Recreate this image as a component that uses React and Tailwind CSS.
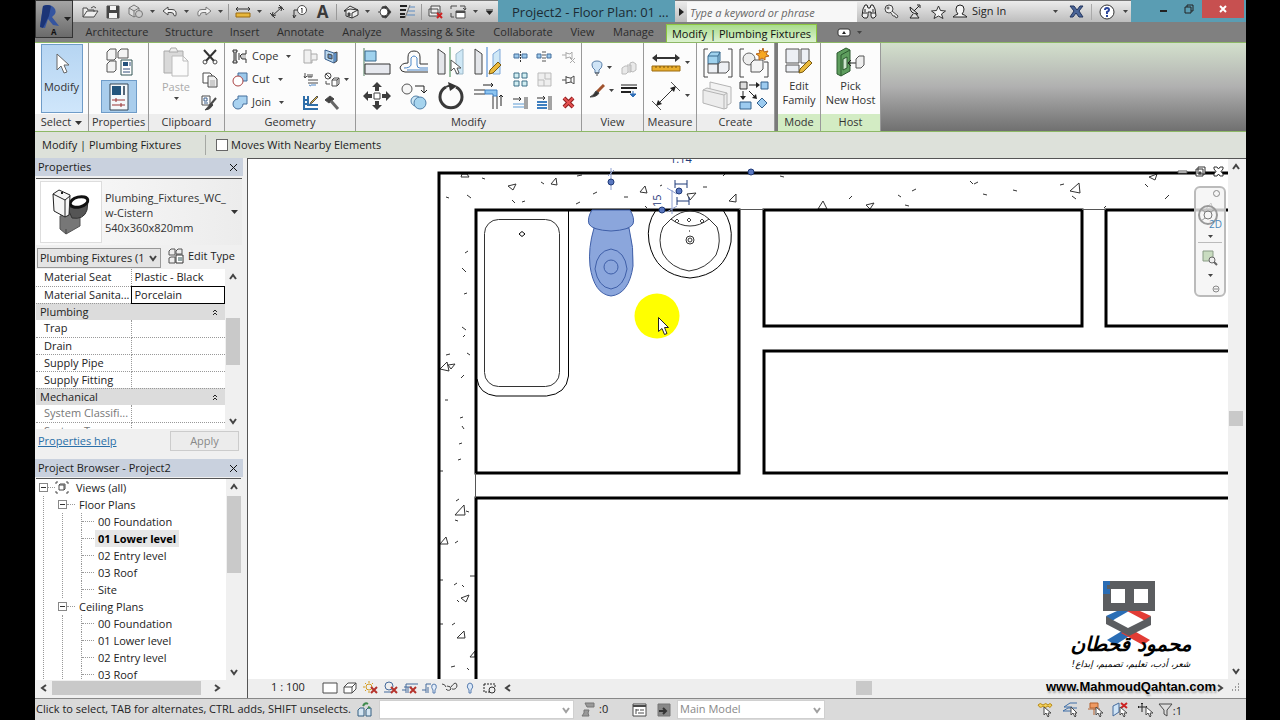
import React, { useState } from "react";

function Svg({ w, h, children, className = "" }) {
  return (
    <svg
      width={w}
      height={h}
      viewBox={`0 0 ${w} ${h}`}
      fill="none"
      stroke="#4a4a4a"
      aria-hidden="true"
      className={`shrink-0 ${className}`}
    >
      {children}
    </svg>
  );
}

function Caret({ className = "" }) {
  return (
    <Svg w={5} h={3} className={className}>
      <path d="M0 0h5L2.5 3z" fill="#444" stroke="none" />
    </Svg>
  );
}

const qatIcons = {
  open: (
    <Svg w={18} h={14}>
      <path d="M2 12V3h4l1 2h6v2M2 12l4-6h11l-4 6z" fill="#eee" />
      <path d="M10 3q3-3 5 0" />
    </Svg>
  ),
  save: (
    <Svg w={14} h={14}>
      <path d="M1 1h12v12H1z" fill="#444" />
      <path d="M4 1h6v4H4zM3 8h8v5H3z" fill="#f4f4f4" stroke="none" />
    </Svg>
  ),
  sync: (
    <Svg w={16} h={15}>
      <path d="M1 4l5-3 5 3v6l-5 3-5-3zM1 4l5 3 5-3M6 7v6" stroke="#777" fill="#ddd" />
      <circle cx="11" cy="10" r="3.5" stroke="#777" fill="#ccc" />
    </Svg>
  ),
  undo: (
    <Svg w={16} h={12}>
      <path d="M1 5l5-4v2.500h4q5 0 4 6-1 1-2 0 0-3-3-3H6V9z" fill="#f2f2f2" />
    </Svg>
  ),
  redo: (
    <Svg w={16} h={12}>
      <path d="M15 5l-5-4v2.500H6q-5 0-4 6 1 1 2 0 0-3 3-3h3V9z" fill="#f2f2f2" stroke="#777" />
    </Svg>
  ),
  measure: (
    <Svg w={16} h={12}>
      <path d="M1 3h14M3 1L1 3l2 2M13 1l2 2-2 2" stroke="#333" />
      <path d="M1 7h14v4H1z" fill="#e7b73c" stroke="#9a6a10" />
    </Svg>
  ),
  dim: (
    <Svg w={16} h={15}>
      <path d="M3 12L13 3M1 9l5 5M10 1l5 5M3 12l4-1M3 12l1-4M13 3l-4 1M13 3l-1 4" stroke="#333" />
    </Svg>
  ),
  tag: (
    <Svg w={16} h={14}>
      <circle cx="10" cy="5" r="4.500" fill="#fff" />
      <path d="M10 3v5M9 4l1-1M5 5H2v7M1 10l1 3 2-3" stroke="#333" />
    </Svg>
  ),
  text: <span className="text-[17px] leading-4 font-bold text-[#3a3a3a]">A</span>,
  house: (
    <Svg w={16} h={14}>
      <path d="M1 6l6-5 8 4v5l-6 3-6-2V6zM1 6l6-2 8 1M9 13V8l6-3" fill="#eee" stroke="#333" />
      <path d="M5 8h2v3H5z" fill="#444" />
    </Svg>
  ),
  section: (
    <Svg w={14} h={14}>
      <path d="M4 2l4-1 5 6-5 6-4-1z" fill="#333" />
      <circle cx="6" cy="7" r="4" fill="#fff" />
      <path d="M0 7h2" />
    </Svg>
  ),
  thin: (
    <Svg w={17} h={13}>
      <path d="M1 1h7M1 5h6M1 9h5M1 12h5" stroke="#222" strokeWidth="2" />
      <path d="M10 2h6M9 6h7M8 10h8" stroke="#5d8bc0" />
      <path d="M11 0L6 13" stroke="#777" />
    </Svg>
  ),
  closeHidden: (
    <Svg w={16} h={14}>
      <path d="M3 1h9v7H3zM1 4h9v7H1z" fill="#eee" />
      <path d="M9 8l5 5M14 8l-5 5" stroke="#c22" strokeWidth="2" />
    </Svg>
  ),
  switchWin: (
    <Svg w={17} h={14}>
      <path d="M6 6h9v7H6z" fill="#fff" />
      <path d="M6 7h9" strokeWidth="2" />
      <path d="M1 4V1h6M10 1h5v4M13 3l2 2 1-2M1 8v4h3" />
    </Svg>
  ),
};

const qatItems = [
  "open", "save", "sync", "caret", "undo", "caret", "redo", "caret", "sep",
  "measure", "caret", "dim", "tag", "text", "sep", "house", "caret", "section", "thin", "sep",
  "closeHidden", "switchWin", "caret",
];

function QuickAccess() {
  return (
    <div className="flex items-center w-[425px] shrink-0 pl-[5px] h-[22px] bg-linear-to-b from-[#e9e9e9] to-[#b9b9b9] border-t border-[#777]">
      {qatItems.map((item, i) => {
        if (item === "sep") return <span key={i} className="w-px h-4 mx-[2px] bg-[#999]" />;
        if (item === "caret")
          return (
            <button key={i} aria-label="More" className="w-[11px] h-5 flex items-center justify-center">
              <Caret />
            </button>
          );
        return (
          <button key={i} aria-label={item} className="w-[23px] h-5 flex items-center justify-center">
            {qatIcons[item]}
          </button>
        );
      })}
      <button aria-label="Customize" className="w-4 h-5 flex items-center justify-center">
        <Svg w={7} h={6}>
          <path d="M0 1h7" stroke="#222" />
          <path d="M0 2h7L3.500 6z" fill="#222" stroke="none" />
        </Svg>
      </button>
    </div>
  );
}

function InfoCenter() {
  return (
    <div className="flex items-center shrink-0 w-[456px] h-[22px] bg-linear-to-b from-[#ececec] to-[#bdbdbd] border-t border-[#777]">
      <button aria-label="Collapse search" className="w-3 flex justify-center">
        <Svg w={5} h={8}>
          <path d="M0 0l5 4-5 4z" fill="#222" stroke="none" />
        </Svg>
      </button>
      <input
        aria-label="Search"
        placeholder="Type a keyword or phrase"
        className="w-[170px] h-[20px] mt-px px-[3px] bg-[#f7f7f7] text-[11px] italic placeholder:text-[#666] outline-none"
      />
      <button aria-label="Search" className="w-6 flex justify-center">
        <Svg w={16} h={15}>
          <path d="M2 5l2-4h2l1 3h2l1-3h2l2 4 1 7-2 2h-2l-1-2V8H7v4l-1 2H3l-2-2z" fill="#eee" stroke="#222" />
          <path d="M2 9h4M10 9h4M4 5v3M12 5v3" stroke="#222" />
        </Svg>
      </button>
      <button aria-label="Subscription" className="w-[22px] flex justify-center">
        <Svg w={16} h={15}>
          <circle cx="5" cy="5" r="4" fill="#eee" stroke="#444" />
          <circle cx="4" cy="4" r="1" />
          <path d="M8 7l6 5-1 2-2-1v-1H9L7 9" fill="#eee" />
        </Svg>
      </button>
      <button aria-label="Communication" className="w-6 flex justify-center">
        <Svg w={14} h={15}>
          <path d="M2 3q0 7 8 7zM6 7l5-5M9 1h3v3M5 10l-3 4h9l-3-4" fill="#ddd" stroke="#222" />
        </Svg>
      </button>
      <button aria-label="Favorites" className="w-[22px] flex justify-center">
        <Svg w={15} h={14}>
          <path d="M7.500 1l2 4.500 5 .5-4 3 1.500 4.500-4.500-2.500L3 13.500 4.500 9 .5 6l5-.5z" fill="#f4f4f4" stroke="#333" />
        </Svg>
      </button>
      <button className="flex items-center gap-[4px] w-[116px] pl-[3px] pr-[7px] text-[11px] text-[#222]">
        <Svg w={16} h={15}>
          <path d="M1 13q2-2 5-3-2-2-2-5 0-4 4-4t4 4q0 3-2 5 3 1 5 3z" fill="#f4f4f4" stroke="#222" />
        </Svg>
        Sign In
        <Caret className="ml-auto" />
      </button>
      <button aria-label="Exchange Apps" className="w-[22px] flex justify-center">
        <Svg w={15} h={13}>
          <path d="M1 1h4l3 4 3-4h3l-4 5 4 6h-4l-3-4-3 4H1l4-6z" fill="#4a6599" stroke="#24365f" />
        </Svg>
      </button>
      <span className="w-px h-4 ml-1 bg-[#aaa]" />
      <button aria-label="Help" className="flex items-center gap-2 pl-[7px]">
        <Svg w={16} h={16}>
          <circle cx="8" cy="8" r="7" fill="#fff" stroke="#333" />
          <path d="M6 6q0-2 2-2t2 2q0 1-2 2v2M8 11v2" stroke="#2a449a" strokeWidth="2" />
        </Svg>
        <Caret />
      </button>
    </div>
  );
}

function WindowButtons() {
  return (
    <div className="flex items-start shrink-0 w-[115px] h-[22px] pl-[19px]">
      <button aria-label="Minimize" className="w-[26px] h-[18px] flex justify-center items-center">
        <span className="w-[7px] h-[2px] mt-1 bg-[#222]" />
      </button>
      <button aria-label="Restore" className="w-[26px] h-[18px] flex justify-center items-center">
        <Svg w={10} h={10}>
          <path d="M1 3h6v6H1z" stroke="#222" />
          <path d="M3 3V1h6v6H7" stroke="#222" />
        </Svg>
      </button>
      <button aria-label="Close" className="w-[42px] h-[18px] flex justify-center items-center bg-[#c75050]">
        <Svg w={8} h={8}>
          <path d="M1 1l6 6M7 1L1 7" stroke="#fff" strokeWidth="2" />
        </Svg>
      </button>
    </div>
  );
}

const tabs = [
  ["Architecture", "w-[80px]"],
  ["Structure", "w-[64px]"],
  ["Insert", "w-[47px]"],
  ["Annotate", "w-[65px]"],
  ["Analyze", "w-[58px]"],
  ["Massing & Site", "w-[93px]"],
  ["Collaborate", "w-[78px]"],
  ["View", "w-[41px]"],
  ["Manage", "w-[61px]"],
];

function Header() {
  return (
    <header className="flex shrink-0 bg-[#808080]">
      <button
        aria-label="Application menu"
        className="w-[38px] h-[38px] shrink-0 border border-[#333] bg-linear-to-b from-[#a5a5a5] to-[#6b6b6b] flex items-start"
      >
        <Svg w={36} h={36}>
          <path d="M7 5q5-2 9 0 5 3 3 8l-3 3 7 9-6-1-5-6-3 9-5-1z" fill="#3555a0" stroke="none" />
          <path d="M7 5q5-2 8 0l-2 10-6 12-3-1z" fill="#1c3577" stroke="none" />
          <path d="M28 16h7l-3.500 4z" fill="#222" stroke="none" />
          <text x="15" y="34" fontSize="8" fontWeight="bold" fill="#111" stroke="none">A</text>
        </Svg>
      </button>
      <div className="flex-1 min-w-0">
        <div className="flex bg-[#5a9db3]">
          <QuickAccess />
          <div className="flex-1 min-w-0 pl-[14px] text-[13px] leading-6 h-[22px] whitespace-nowrap text-[#1c2b33]">
            Project2 - Floor Plan: 01 ...
          </div>
          <InfoCenter />
          <WindowButtons />
        </div>
        <nav className="flex items-end h-5 pl-1">
          {tabs.map(([name, width]) => (
            <button key={name} className={`${width} h-5 shrink-0 text-[11px] text-[#2c2c2c] whitespace-nowrap text-center`}>
              {name}
            </button>
          ))}
          <button className="w-[151px] h-[18px] ml-[2px] shrink-0 text-[11px] leading-4 whitespace-nowrap text-[#111] bg-linear-to-b from-[#a9dc8c] to-[#dcf2cf] border-t border-x border-[#8cc63f]">
            Modify | Plumbing Fixtures
          </button>
          <button aria-label="Minimize ribbon" className="flex items-center gap-[6px] h-5 ml-5">
            <Svg w={14} h={9}>
              <rect x="1" y="1" width="12" height="7" rx="2" fill="#fff" stroke="#333" />
              <path d="M5 6h4L7 3z" fill="#222" stroke="none" />
            </Svg>
            <Caret />
          </button>
        </nav>
      </div>
    </header>
  );
}

const small = {
  cut: (
    <Svg w={16} h={16}>
      <path d="M2 1l10 11M14 1L4 12" stroke="#333" strokeWidth="2" />
      <circle cx="3" cy="13" r="2" /><circle cx="13" cy="13" r="2" />
    </Svg>
  ),
  copy: (
    <Svg w={16} h={16}>
      <path d="M1 1h7l2 2v8H1z" fill="#fff" /><path d="M6 4h6l3 3v8H6z" fill="#eee" />
      <path d="M8 9h5M8 11h5M8 13h5" stroke="#aaa" />
    </Svg>
  ),
  match: (
    <Svg w={17} h={16}>
      <path d="M1 1h8v9H1z" fill="#fff" /><path d="M3 3h3v3H3zM3 8h4" stroke="#3a5f8c" />
      <path d="M15 3l-5 6" strokeWidth="2" /><path d="M10 8l2 2q-3 5-8 5 3-3 6-7z" fill="#444" />
    </Svg>
  ),
  cope: (
    <Svg w={16} h={15}>
      <path d="M1 1h4v2H4v9h1v2H1v-2h1V3H1zM14 1v4h-4l-2 2 2 3h4v4M7 4v7" fill="#ccc" stroke="#333" />
    </Svg>
  ),
  cutGeo: (
    <Svg w={16} h={15}>
      <path d="M6 1h9v8H6z" fill="#9cc8ea" stroke="#446e9c" />
      <circle cx="6" cy="9" r="5" fill="#fff" stroke="#a44" />
    </Svg>
  ),
  joinGeo: (
    <Svg w={16} h={15}>
      <path d="M6 4V1h9v8h-4a5 5 0 1 1-5-5z" fill="#a9d2f0" stroke="#446e9c" />
    </Svg>
  ),
  notch: (
    <Svg w={16} h={15}><path d="M1 1h7v4h6v6H9v3H1zM8 5v9" fill="#f0f0f0" stroke="#aaa" /></Svg>
  ),
  wallOpen: (
    <Svg w={14} h={15}>
      <path d="M1 1l9 3v10l-9-4z" fill="#b9d7ee" stroke="#3a5f8c" /><path d="M10 4l3-1v9l-3 2M4 5l4 1v4L4 9z" fill="#5f8fc4" />
    </Svg>
  ),
  beam: (
    <Svg w={16} h={15}>
      <path d="M2 1v5M1 4l1 2 2-2M5 2v3h4V2M7 2v3M5 8h10M5 11h10" /><path d="M8 13h5M8 14l-2-1" stroke="#4a86c8" />
    </Svg>
  ),
  uncut: (
    <Svg w={16} h={15}>
      <circle cx="4" cy="4" r="3" /><path d="M2 2l4 4M8 8l2-2h5v6l-2 2H8zM8 8h5v6M13 8l2-2M2 9v3h4" />
    </Svg>
  ),
  paintWall: (
    <Svg w={16} h={15}>
      <path d="M1 1v13h14M5 1v9h10M1 5h3M1 9h3" stroke="#2f6faa" strokeWidth="2" />
      <path d="M14 1L8 7l-1 2 2-1 6-6z" fill="#e7b73c" stroke="#555" />
    </Svg>
  ),
  hammer: (
    <Svg w={16} h={15}>
      <path d="M1 5l5-4 4 3-5 4z" fill="#444" /><path d="M7 6l7 8" strokeWidth="3" stroke="#666" />
    </Svg>
  ),
  split: (
    <Svg w={15} h={11}>
      <path d="M1 3h5v4H1zM9 3h5v4H9z" fill="#9cc8ea" stroke="#446e9c" /><path d="M7.500 0v11" stroke="#333" strokeDasharray="2 1" />
    </Svg>
  ),
  splitGap: (
    <Svg w={16} h={11}>
      <path d="M1 3h4v4H1zM11 3h4v4h-4z" fill="#9cc8ea" stroke="#446e9c" /><path d="M7 0v11M9 0v11" stroke="#555" strokeDasharray="2 1" />
    </Svg>
  ),
  array: (
    <Svg w={15} h={15}>
      <path d="M1 1h5v5H1zM9 1h5v5H9zM1 9h5v5H1zM9 9h5v5H9z" fill="#d2eef2" stroke="#3c6f86" />
    </Svg>
  ),
  scale: (
    <Svg w={15} h={15}>
      <path d="M1 1h13v13H1z" fill="#eee" stroke="#bbb" /><path d="M1 8h6v6M8 1v6h6" stroke="#bbb" />
    </Svg>
  ),
  trim: (
    <Svg w={16} h={14}>
      <path d="M1 3h8M7 1l2 2-2 2" stroke="#333" /><path d="M1 8h11M1 11h11" stroke="#5d9bd4" /><path d="M13 1v12M15 1v12" />
    </Svg>
  ),
  trimMulti: (
    <Svg w={16} h={14}>
      <path d="M1 2h8M7 0l2 2-2 2" stroke="#333" /><path d="M1 6h10M1 9h10M1 12h10" stroke="#3e7fc0" strokeWidth="2" /><path d="M13 0v14M15 0v14" />
    </Svg>
  ),
  unpin: (
    <Svg w={15} h={13}>
      <path d="M1 5h4M5 2v7M5 3l4 1 2-2v7L9 7 5 8M9 8l5 5M14 8l-5 5" stroke="#aaa" />
    </Svg>
  ),
  pin: (
    <Svg w={13} h={9}><path d="M0 5h4M4 1v8M4 2l4 1h1l3-2v8L9 7 4 8M9 3v4" /></Svg>
  ),
  del: (
    <Svg w={13} h={13}>
      <path d="M2 2l9 9M11 2l-9 9" stroke="#8e1f1f" strokeWidth="4" /><path d="M2 2l9 9M11 2l-9 9" stroke="#e35050" strokeWidth="2" />
    </Svg>
  ),
  bulb: (
    <Svg w={12} h={16}>
      <path d="M4 10q-3-2-3-5 0-4 5-4t5 4q0 3-3 5v3H4z" fill="#cfe4f6" stroke="#5a7fa8" /><path d="M4 13h4M5 15h2" />
    </Svg>
  ),
  ghost: (
    <Svg w={16} h={14}>
      <path d="M1 7l3-2h3v6l-2 2H1zM6 4h4v7H7M9 2l3-1 3 2v6l-3 2-3-1z" fill="#e9e9e9" stroke="#bbb" />
    </Svg>
  ),
  brush: (
    <Svg w={16} h={14}>
      <path d="M15 1L8 8" stroke="#a0522d" strokeWidth="3" /><path d="M7 7l3 2q-2 4-9 4 4-2 6-6z" fill="#333" />
    </Svg>
  ),
  lines: (
    <Svg w={16} h={14}>
      <path d="M0 1h16" stroke="#222" /><path d="M0 4h16" stroke="#222" strokeWidth="2" /><path d="M0 8h10" stroke="#222" strokeWidth="2" />
      <path d="M12 7v3M9 10h6l-3 3z" fill="#2f6fb8" stroke="#2f6fb8" />
    </Svg>
  ),
};

const big = {
  cursor: (
    <Svg w={14} h={22}>
      <path d="M2 1v16l4-4 3 7 3-1-3-7h5z" fill="#fff" stroke="#666" />
    </Svg>
  ),
  typeProps: (
    <Svg w={30} h={28}>
      <path d="M3 4l3-3h6v9l-2 2H3zM3 16l3-3h6v9l-2 2H3zM14 4l3-3h7v9H14z" fill="#f4f4f4" stroke="#555" />
      <path d="M17 12h11v15H17z" fill="#fff" stroke="#355" />
      <path d="M19 14h5v4h-5z" fill="#25527c" stroke="none" />
      <path d="M26 14v4M19 21h7M19 24h7" stroke="#334f7a" />
    </Svg>
  ),
  props: (
    <Svg w={22} h={28}>
      <path d="M2 1h18v26H2z" fill="#f4f8fb" stroke="#345" />
      <path d="M4 3h9v9H4z" fill="#23557d" stroke="none" />
      <path d="M16 3v9" stroke="#567" strokeWidth="2" />
      <path d="M4 17h13M4 22h13M8 15v4M13 20v4" stroke="#933" />
    </Svg>
  ),
  paste: (
    <Svg w={26} h={30}>
      <path d="M1 4h19v22H1z" fill="#d9d9d9" stroke="#aaa" />
      <path d="M6 5l2-4h5l2 4z" fill="#eee" stroke="#aaa" />
      <path d="M9 9h11l5 5v15H9z" fill="#fbfbfb" stroke="#bbb" />
      <path d="M20 9v5h5" stroke="#bbb" />
    </Svg>
  ),
  align: (
    <Svg w={30} h={28}>
      <path d="M2 0v28" stroke="#4d7a5d" />
      <path d="M3 3h11v10H3z" fill="#9fd2ee" stroke="#39688c" />
      <path d="M3 16h25v10H3z" fill="#e6e8ee" stroke="#333" />
    </Svg>
  ),
  offset: (
    <Svg w={30} h={26}>
      <path d="M29 15h-8V8q0-6-6-6T9 8v6q-7 0-8 5 1 4 5 4h23" stroke="#333" />
      <path d="M29 19h-8q-3 0-3-3V9q-3-4-6 0v7q-1 3-7 3" stroke="#4a86c8" />
      <path d="M29 21H8" stroke="#4a86c8" />
    </Svg>
  ),
  mirrorPick: (
    <Svg w={28} h={30}>
      <path d="M1 2l7 5v20H1z" fill="#e4e6ea" stroke="#444" />
      <path d="M26 2l-7 5v20h7z" fill="#cfe8f6" stroke="#9bb8c8" />
      <path d="M13 0v30" stroke="#3f8b4d" />
      <path d="M14 13v11l3-3 3 6 2-1-2-5h4z" fill="#fff" stroke="#555" />
    </Svg>
  ),
  mirrorDraw: (
    <Svg w={28} h={30}>
      <path d="M1 2l7 5v20H1z" fill="#e4e6ea" stroke="#444" />
      <path d="M26 2l-7 5v20h7z" fill="#cfe8f6" stroke="#7fa8d8" />
      <path d="M13 0v30" stroke="#3b7fd0" />
      <path d="M24 15l-8 8-1 4 4-1 8-8z" fill="#e9b93c" stroke="#7a5a10" />
    </Svg>
  ),
  move: (
    <Svg w={28} h={28}>
      <path d="M11 11h6v6h-6z" fill="#fff" stroke="#444" />
      <path d="M14 0l5 5h-3v4h-4V5H9zM14 28l5-5h-3v-4h-4v4H9zM0 14l5-5v3h4v4H5v3zM28 14l-5-5v3h-4v4h4v3z" fill="#3d3d3d" stroke="none" />
    </Svg>
  ),
  copyObj: (
    <Svg w={28} h={28}>
      <circle cx="7" cy="7" r="5" fill="#f6f6f6" stroke="#555" />
      <path d="M15 4h9v6M21 8l3 3 3-3" stroke="#222" />
      <circle cx="16" cy="19" r="5" fill="#cfe8f6" stroke="#4f7fa8" />
      <circle cx="20" cy="21" r="6" fill="#a6d4ee" stroke="#4f7fa8" />
    </Svg>
  ),
  rotate: (
    <Svg w={28} h={28}>
      <path d="M9 5a11 11 0 1 0 10 0" stroke="#3a3a3a" strokeWidth="3" />
      <path d="M9 5q3-2 5-1" stroke="#3a3a3a" strokeWidth="2" />
      <path d="M11 0l9 4-7 5z" fill="#333" stroke="none" />
    </Svg>
  ),
  corner: (
    <Svg w={30} h={28}>
      <path d="M1 8h11M1 12h11M20 14v13M24 14v13" stroke="#333" />
      <path d="M12 8h12v6h-4v-2h-8z" fill="#8cc4f0" stroke="#3e7fc0" />
      <path d="M10 3h10M18 1l2 2-2 2M28 24V13M26 15l2-2 2 2" stroke="#222" />
    </Svg>
  ),
  measure: (
    <Svg w={30} h={18}>
      <path d="M2 4h26" stroke="#333" strokeWidth="2" />
      <path d="M6 0L1 4l5 4zM24 0l5 4-5 4z" fill="#333" stroke="none" />
      <path d="M1 12h28v5H1z" fill="#e9ae2c" stroke="#9a6a10" />
      <path d="M5 12v2M9 12v2M13 12v2M17 12v2M21 12v2M25 12v2" stroke="#7a5208" />
    </Svg>
  ),
  dim: (
    <Svg w={30} h={28}>
      <path d="M5 24L25 4" stroke="#333" />
      <path d="M1 19l9 9M20 0l9 9" stroke="#555" />
      <path d="M5 24l6-2-4-4zM25 4l-6 2 4 4z" fill="#222" stroke="none" />
    </Svg>
  ),
  group: (
    <Svg w={30} h={30}>
      <path d="M5 1H1v28h4M25 1h4v28h-4" stroke="#444" />
      <path d="M5 8l3-4h9v9l-2 3H5zM5 8h10v8M15 8l2-4" fill="#9fd2ee" stroke="#39688c" />
      <path d="M5 16h10v9H5zM15 16l3-2h8v8l-3 3h-8z" fill="#eef0f4" stroke="#555" />
    </Svg>
  ),
  similar: (
    <Svg w={30} h={30}>
      <path d="M5 1H1v28h4M25 14h4v15h-4" stroke="#444" />
      <circle cx="10" cy="11" r="6" fill="#eee" stroke="#666" />
      <path d="M12 15l3-3h9v9l-3 3h-9z" fill="#f4f4f4" stroke="#555" />
      <path d="M24 0l1 4 4-1-2 3 3 2-4 1v3l-3-2-3 2v-4l-3-2 4-1-1-3 3 1z" fill="#f7a823" stroke="#b5651d" />
    </Svg>
  ),
  parts: (
    <Svg w={31} h={29}>
      <path d="M8 1l21 5v16l-3 2L8 19z" fill="#f3f3f3" stroke="#b4b4b4" />
      <path d="M1 9l4-2 20 5v15l-3 1-21-6z" fill="#ececec" stroke="#b4b4b4" />
      <path d="M1 9l21 5v14M22 14l3-2" stroke="#b4b4b4" />
    </Svg>
  ),
  assembly: (
    <Svg w={30} h={29}>
      <path d="M1 1h7v7H1z" fill="#ddd" stroke="#333" />
      <path d="M22 1h7v7h-7zM1 21h11v7H1z" fill="#9ccbf0" stroke="#33608c" />
      <path d="M23 17l5 5-5 5-5-5z" fill="#9ccbf0" stroke="#33608c" />
      <path d="M10 4h9M4 10v8M10 10l6 6" stroke="#222" />
      <path d="M17 1l4 3-4 3zM1 15l3 4 3-4zM18 18l-5-1 4-4z" fill="#222" stroke="none" />
    </Svg>
  ),
  editFamily: (
    <Svg w={28} h={28}>
      <path d="M1 2h13v14H1zM16 2h8v14h-8zM1 18h13v7H1z" fill="#eceff4" stroke="#555" />
      <path d="M24 13l-9 9-1 4 4-1 9-9z" fill="#e9b93c" stroke="#7a5a10" />
    </Svg>
  ),
  host: (
    <Svg w={30} h={30}>
      <path d="M2 6l9-5 4 2v21l-9 5-4-2z" fill="#5e9e5e" stroke="#2c5a30" />
      <path d="M6 8l9-5M6 8v21M8 12l4-2v11l-4 2z" fill="#cfe6cf" stroke="#2c5a30" />
      <path d="M13 16h8M16 13l-3 3 3 3" stroke="#222" />
      <path d="M21 12l3-3h5v9l-3 3h-5z" fill="#eee" stroke="#555" />
    </Svg>
  ),
};

function Tool({ icon, label, caret, className = "" }) {
  return (
    <button aria-label={label} className={`flex items-center justify-center ${className}`}>
      {icon}
      {caret && <Caret className="ml-1" />}
    </button>
  );
}

function Panel({ title, width, caret, green, children }) {
  return (
    <section className={`${width} shrink-0 flex flex-col h-[88px] bg-[#fcfcfc] border-r border-[#999]`}>
      <div className="h-[71px] flex justify-center">{children}</div>
      <h2
        className={`h-[17px] flex items-center justify-center gap-1 text-[11px] text-[#333] ${
          green ? "bg-[#d3ecc4]" : "bg-[#ededed]"
        }`}
      >
        {title}
        {caret && (
          <Svg w={7} h={4}>
            <path d="M0 0h7L3.500 4z" fill="#333" stroke="none" />
          </Svg>
        )}
      </h2>
    </section>
  );
}

function GeoButton({ icon, name }) {
  return (
    <button className="flex items-center gap-1 h-[23px] text-[11px] text-[#333]">
      {icon}
      {name}
      <Caret className="ml-1" />
    </button>
  );
}

function Ribbon() {
  return (
    <div className="flex shrink-0 h-[90px] border-y border-[#8db866] bg-linear-to-b from-[#d3e0cc] via-[#b0b0b0] to-[#707070]">
      <Panel title="Select" width="w-[54px]" caret>
        <button className="w-[42px] h-[69px] mt-px flex flex-col items-center pt-2 gap-1 border border-[#6f9cc8] bg-linear-to-b from-[#b6d5f2] to-[#cfe6fb] text-[11px] text-[#333]">
          {big.cursor}
          Modify
        </button>
      </Panel>
      <Panel title="Properties" width="w-[60px]">
        <div className="flex flex-col items-center gap-[2px] pt-[3px]">
          <Tool icon={big.typeProps} label="Type Properties" className="h-8" />
          <Tool icon={big.props} label="Properties" className="w-9 h-[33px] border border-[#6f9cc8] bg-[#a9cdec]" />
        </div>
      </Panel>
      <Panel title="Clipboard" width="w-[76px]">
        <div className="flex gap-2 pl-1">
          <button className="w-[34px] flex flex-col items-center pt-1 text-[11px] text-[#aaa]">
            {big.paste}
            <span className="leading-5">Paste</span>
            <Caret />
          </button>
          <div className="flex flex-col pt-[2px]">
            <Tool icon={small.cut} label="Cut to Clipboard" className="h-[23px]" />
            <Tool icon={small.copy} label="Copy to Clipboard" className="h-[23px]" />
            <Tool icon={small.match} label="Match Type" className="h-[23px]" />
          </div>
        </div>
      </Panel>
      <Panel title="Geometry" width="w-[131px]">
        <div className="flex w-full pl-[7px] pt-[2px]">
          <div className="flex flex-col w-[67px]">
            <GeoButton icon={small.cope} name="Cope" />
            <GeoButton icon={small.cutGeo} name="Cut" />
            <GeoButton icon={small.joinGeo} name="Join" />
          </div>
          <div className="flex flex-col w-[23px]">
            <Tool icon={small.notch} label="Wall Joins" className="h-[23px]" />
            <Tool icon={small.beam} label="Beam Joins" className="h-[23px]" />
            <Tool icon={small.paintWall} label="Split Face" className="h-[23px]" />
          </div>
          <div className="flex flex-col items-start pl-[2px]">
            <Tool icon={small.wallOpen} label="Wall Opening" className="h-[23px]" />
            <Tool icon={small.uncut} label="Unjoin" caret className="h-[23px]" />
            <Tool icon={small.hammer} label="Demolish" className="h-[23px]" />
          </div>
        </div>
      </Panel>
      <Panel title="Modify" width="w-[226px]">
        <div className="flex w-full gap-[2px] pl-[2px] pt-[2px]">
          <div className="grid grid-cols-[37px_37px_37px_37px] grid-rows-[34px_34px]">
            <Tool icon={big.align} label="Align" />
            <Tool icon={big.offset} label="Offset" />
            <Tool icon={big.mirrorPick} label="Mirror - Pick Axis" />
            <Tool icon={big.mirrorDraw} label="Mirror - Draw Axis" />
            <Tool icon={big.move} label="Move" />
            <Tool icon={big.copyObj} label="Copy" />
            <Tool icon={big.rotate} label="Rotate" />
            <Tool icon={big.corner} label="Trim/Extend to Corner" />
          </div>
          <div className="grid grid-cols-[24px_24px_24px] grid-rows-[23px_23px_23px]">
            <Tool icon={small.split} label="Split Element" />
            <Tool icon={small.splitGap} label="Split with Gap" />
            <Tool icon={small.unpin} label="Unpin" />
            <Tool icon={small.array} label="Array" />
            <Tool icon={small.scale} label="Scale" />
            <Tool icon={small.pin} label="Pin" />
            <Tool icon={small.trim} label="Trim Single" />
            <Tool icon={small.trimMulti} label="Trim Multiple" />
            <Tool icon={small.del} label="Delete" />
          </div>
        </div>
      </Panel>
      <Panel title="View" width="w-[62px]">
        <div className="grid grid-cols-[32px_22px] grid-rows-[23px_23px] pt-[13px]">
          <Tool icon={small.bulb} label="Hide in View" caret />
          <Tool icon={small.ghost} label="Displace" />
          <Tool icon={small.brush} label="Override Graphics" caret />
          <Tool icon={small.lines} label="Linework" />
        </div>
      </Panel>
      <Panel title="Measure" width="w-[53px]">
        <div className="flex flex-col pt-[3px]">
          <Tool icon={big.measure} label="Measure" caret className="h-[33px]" />
          <Tool icon={big.dim} label="Aligned Dimension" caret className="h-[33px]" />
        </div>
      </Panel>
      <Panel title="Create" width="w-[78px]">
        <div className="grid grid-cols-[36px_36px] grid-rows-[33px_33px] pt-[3px]">
          <Tool icon={big.group} label="Create Group" />
          <Tool icon={big.similar} label="Create Similar" />
          <Tool icon={big.parts} label="Create Parts" />
          <Tool icon={big.assembly} label="Create Assembly" />
        </div>
      </Panel>
      <span className="w-[3px] shrink-0 bg-[#7a7a7a]" />
      <Panel title="Mode" width="w-[43px]" green>
        <button className="flex flex-col items-center pt-1 text-[11px] leading-[14px] text-[#333]">
          {big.editFamily}
          <span className="mt-1">Edit</span>
          <span>Family</span>
        </button>
      </Panel>
      <Panel title="Host" width="w-[60px]" green>
        <button className="flex flex-col items-center pt-1 text-[11px] leading-[14px] whitespace-nowrap text-[#333]">
          {big.host}
          <span className="mt-[2px]">Pick</span>
          <span>New Host</span>
        </button>
      </Panel>
    </div>
  );
}

function OptionsBar() {
  return (
    <div className="flex items-center shrink-0 h-[26px] pl-[7px] bg-[#dde1da] text-[11px] text-[#1c1c1c]">
      <span className="w-[163px]">Modify | Plumbing Fixtures</span>
      <span className="w-px h-5 mr-[10px] bg-[#a5a8a3]" />
      <label className="flex items-center gap-[3px]">
        <input type="checkbox" className="appearance-none w-3 h-3 bg-white border border-[#666]" />
        Moves With Nearby Elements
      </label>
    </div>
  );
}

function Chevron({ dir }) {
  const paths = {
    up: "M1 6l3-4 3 4",
    down: "M1 2l3 4 3-4",
    left: "M6 1L2 4l4 3",
    right: "M2 1l4 3-4 3",
  };
  return (
    <Svg w={8} h={8}>
      <path d={paths[dir]} stroke="#444" strokeWidth="2" />
    </Svg>
  );
}

// before / thumb / after are flex weights so the thumb keeps its place when the bar grows
function VScroll({ before, thumb, after }) {
  return (
    <div className="w-[15px] shrink-0 flex flex-col items-center bg-[#f0f0f0]">
      <button aria-label="Scroll up" className="h-4 flex items-center"><Chevron dir="up" /></button>
      <div style={{ flexGrow: before }} />
      <div className="w-[14px] bg-[#c9c9c9]" style={{ flexGrow: thumb }} />
      <div style={{ flexGrow: after }} />
      <button aria-label="Scroll down" className="h-4 flex items-center"><Chevron dir="down" /></button>
    </div>
  );
}

function PanelTitle({ children }) {
  return (
    <div className="flex items-center justify-between shrink-0 h-[18px] pl-[3px] pr-[5px] bg-[#c9d1de] text-[11px] text-[#1c1c1c]">
      <h2>{children}</h2>
      <button aria-label="Close">
        <Svg w={9} h={9}>
          <path d="M1 1l7 7M8 1L1 8" stroke="#111" />
        </Svg>
      </button>
    </div>
  );
}

const propertyRows = [
  { name: "Material Seat", value: "Plastic - Black" },
  { name: "Material Sanita...", value: "Porcelain", active: true },
  { group: "Plumbing" },
  { name: "Trap" },
  { name: "Drain" },
  { name: "Supply Pipe" },
  { name: "Supply Fitting" },
  { group: "Mechanical" },
  { name: "System Classifi...", muted: true },
  { name: "System Type", muted: true },
];

function Properties() {
  return (
    <section className="flex flex-col shrink-0 h-[301px]">
      <PanelTitle>Properties</PanelTitle>
      <button className="flex items-center shrink-0 h-[67px] mt-[2px] mx-px pl-1 pr-1 border-t border-[#555] text-left text-[11px] leading-[15px] text-[#333] bg-linear-to-r from-[#fafafa] to-[#ececec]">
        <span className="w-[62px] h-[62px] shrink-0 bg-white border border-[#ddd] flex items-center justify-center">
          <Svg w={42} h={46}>
            <path d="M10 27v13l6 5 14-8V22z" fill="#777" stroke="#555" />
            <path d="M16 40v5" stroke="#444" />
            <path d="M18 20l4 9q12 2 15-8l1-9-5-2z" fill="#555" stroke="#333" />
            <ellipse cx="29" cy="13" rx="9" ry="5" fill="#fff" stroke="#111" strokeWidth="3" transform="rotate(-14 29 13)" />
            <path d="M3 5l6-4 11 5-1 20-4 2L4 22z" fill="#f6f6f6" stroke="#222" />
            <path d="M3 5l12 6 5-4M15 11v17" stroke="#222" />
            <path d="M11 4h2" stroke="#222" strokeWidth="2" />
          </Svg>
        </span>
        <span className="flex-1 pl-[3px]">
          Plumbing_Fixtures_WC_
          <br />
          w-Cistern
          <br />
          540x360x820mm
        </span>
        <Svg w={7} h={4}>
          <path d="M0 0h7L3.500 4z" fill="#333" stroke="none" />
        </Svg>
      </button>
      <div className="flex items-start shrink-0 h-[23px] mt-px pt-[2px] pl-[2px]">
        <div className="relative">
          <select
            aria-label="Filter"
            className="appearance-none block w-[124px] h-5 pl-[2px] border border-[#999] bg-[#e4e4e4] text-[11px] text-[#222]"
          >
            <option>Plumbing Fixtures (1</option>
          </select>
          <span className="absolute right-1 top-[6px] pointer-events-none"><Chevron dir="down" /></span>
        </div>
        <button className="flex items-center gap-1 pl-[7px] text-[11px] text-[#222] whitespace-nowrap">
          <Svg w={16} h={16}>
            <path d="M1 3l2-2h4v6H1zM1 10l2-1h4v6H1zM8 3l2-2h4v5H8z" fill="#eee" stroke="#555" />
            <path d="M8 7h7v8H8z" fill="#fff" stroke="#333" />
            <path d="M10 10h4M10 12h4" stroke="#355" />
          </Svg>
          Edit Type
        </button>
      </div>
      <div className="flex flex-1 min-h-0 ml-px mr-[3px] bg-white overflow-hidden">
        <div className="flex-1 overflow-hidden">
          <table className="w-full table-fixed border-collapse text-[11px] leading-4 text-[#222]">
            <tbody>
              {propertyRows.map((row) =>
                row.group ? (
                  <tr key={row.group} className="h-[17px] bg-[#dcdcdc]">
                    <th colSpan={2} className="p-0 pl-1 font-normal text-left">
                      <div className="flex items-center justify-between pr-[7px]">
                        {row.group}
                        <Svg w={6} h={8}>
                          <path d="M1 4l2-2 2 2M1 7l2-2 2 2" stroke="#222" />
                        </Svg>
                      </div>
                    </th>
                  </tr>
                ) : (
                  <tr key={row.name} className="h-[17px]">
                    <td className={`w-[95px] p-0 pl-2 whitespace-nowrap border-b border-r border-dotted border-[#999] ${row.muted ? "text-[#777]" : ""}`}>
                      {row.name}
                    </td>
                    <td className={`p-0 pl-[3px] whitespace-nowrap ${row.active ? "border border-black" : "border-b border-dotted border-[#999]"}`}>
                      {row.value}
                    </td>
                  </tr>
                )
              )}
            </tbody>
          </table>
        </div>
        <VScroll before={33} thumb={46} after={48} />
      </div>
      <div className="flex items-start justify-between shrink-0 h-[30px] pt-[2px] pl-[3px] pr-1">
        <a href="#help" className="text-[11px] leading-5 text-[#2a6fa8] underline">Properties help</a>
        <button disabled className="w-[69px] h-5 border border-[#ccc] bg-[#ececec] text-[11px] text-[#888]">Apply</button>
      </div>
    </section>
  );
}

const tree = [
  { name: "Floor Plans", views: ["00 Foundation", "01 Lower level", "02 Entry level", "03 Roof", "Site"] },
  { name: "Ceiling Plans", views: ["00 Foundation", "01 Lower level", "02 Entry level", "03 Roof"] },
];

function Toggle() {
  return (
    <button aria-label="Collapse" className="w-[9px] h-[9px] shrink-0 flex items-center justify-center border border-[#888] bg-white">
      <span className="w-[5px] h-px bg-[#333]" />
    </button>
  );
}

function ProjectBrowser() {
  const [current, setCurrent] = useState("Floor Plans/01 Lower level");

  return (
    <section className="flex flex-col flex-1 min-h-0">
      <PanelTitle>Project Browser - Project2</PanelTitle>
      <div className="flex flex-1 min-h-0 mt-px ml-px mr-[2px] border-t border-[#555] bg-white">
        <div className="flex-1 overflow-hidden pl-[3px] text-[11px] leading-[17px] text-[#222]">
          <div className="flex items-center h-[17px]">
            <Toggle />
            <span className="w-[7px] border-t border-dotted border-[#999]" />
            <Svg w={14} h={13} className="mr-[7px]">
              <path d="M1 3V1h2M11 1h2v2M13 10v2h-2M3 12H1v-2" />
              <path d="M4 4h5v5H4zM4 4l1-1h5v5L9 9" />
            </Svg>
            Views (all)
          </div>
          <ul className="ml-1 pl-[14px] border-l border-dotted border-[#999]">
            {tree.map((group) => (
              <li key={group.name}>
                <div className="flex items-center h-[17px]">
                  <Toggle />
                  <span className="w-2 mr-1 border-t border-dotted border-[#999]" />
                  {group.name}
                </div>
                <ul className="ml-1 pl-[18px] border-l border-dotted border-[#999]">
                  {group.views.map((view) => {
                    const id = `${group.name}/${view}`;
                    return (
                      <li key={view} className="flex items-center h-[17px] border-l border-dotted border-[#999]">
                        <span className="w-3 mr-px border-t border-dotted border-[#999]" />
                        <button
                          onClick={() => setCurrent(id)}
                          className={`px-[3px] ${id === current ? "font-bold bg-[#e6e6e6] text-black" : ""}`}
                        >
                          {view}
                        </button>
                      </li>
                    );
                  })}
                </ul>
              </li>
            ))}
          </ul>
        </div>
        <VScroll before={1} thumb={78} after={92} />
      </div>
      <div className="flex items-center shrink-0 h-4 mb-[2px] ml-px mr-[2px] pl-1 pr-5 bg-[#f0f0f0]">
        <button aria-label="Scroll left" className="w-3"><Chevron dir="left" /></button>
        <div className="flex-1 h-[14px] mr-3 bg-[#c9c9c9]" />
        <button aria-label="Scroll right"><Chevron dir="right" /></button>
      </div>
    </section>
  );
}

// Concrete hatch of the outer wall
const stones = [
  "M462 174l5 0 2 3-8 0z", "M508 186l8-2-3 6z", "M551 184l5-6 1 7z", "M640 192l5-6 2 7z", "M687 194l9-1-6 7z",
  "M729 201l7-7 0 8z", "M818 209l5-8 4 8z", "M866 205l8-2-4 6z", "M1070 191l9-8 1 10z", "M1149 177l8-3-2 6z",
  "M1206 209l5-6 2 6z", "M440 369l7-7 2 9z", "M448 365l7-1-4 5z", "M455 515l9-10 1 10z", "M440 544l6-7 2 7z",
  "M461 598l8-3-3 7z", "M457 638l7-7 1 7z", "M470 657l5-6 0 6z",
];

const flecks = [
  "M446 197l3 1", "M467 195l4 3", "M482 178l3 1", "M512 200l3 3", "M522 202l3-1", "M541 182l3 2", "M577 176l5-1",
  "M593 194l4-2", "M624 197l4 0", "M576 204l4-2", "M645 206l2 2", "M660 186l2-1", "M703 187l4 0", "M723 176l3-3",
  "M780 176l4 1", "M849 199l3-3", "M898 195l3 2", "M912 191l4-2", "M905 205l4 1", "M970 181l3 3", "M974 184l4-2",
  "M983 194l4 1", "M1013 190l4 1", "M1060 185l4-1", "M1072 196l4 3", "M1104 208l2-2", "M1145 184l3 3", "M1165 199l4-4",
  "M465 253l3-2", "M462 268l4 4", "M464 294l3-1", "M462 327l4 3", "M463 337l2-2", "M467 353l3 2", "M446 355l4-1",
  "M461 378l3-3", "M445 400l3 0", "M460 418l3-1", "M462 426l2 3", "M459 444l3-1", "M458 460l3-1", "M456 501l3-2",
  "M455 520l3 1", "M466 511l3 1", "M455 543l3-2", "M454 585l3-2", "M462 585l2 2", "M457 600l2 2", "M452 625l3-2",
  "M451 667l4-1", "M467 668l2 2", "M470 576h5", "M440 580h3", "M440 624h3", "M440 471h3",
];

function FloorPlan() {
  return (
    <svg className="absolute inset-0 w-full h-full" role="img" aria-label="Floor plan">
      <g transform="translate(-248 -159)" fill="none" stroke="#000">
        <g stroke="#333">
          {stones.map((d) => <path key={d} d={d} />)}
          {flecks.map((d) => <path key={d} d={d} />)}
        </g>
        <g strokeWidth="3">
          <path d="M439 2000V173H3000" />
          <path d="M764 210H1082V326H764zM1106 210H3000V326H1106zM764 351H3000V473H764z" />
          <path d="M476 2000V498H3000" />
          <path d="M476 210H739V473H476z" />
        </g>
        <path d="M739 209.500h25M1082 209.500h24M475.500 473v25" stroke="#555" />

        {/* bath */}
        <path d="M568.500 210V376q-2 18-22 20H496q-17-2-19-17" />
        <rect x="484.500" y="219.500" width="75" height="167" rx="14" stroke="#333" />
        <path d="M519 234l3-2.500 3 2.500-3 2.500z" />

        {/* selected WC */}
        <g fill="#8ba6dc" stroke="#3f5fa8">
          <path d="M594 228q-6 20-4 38 4 28 21 30 18-2 22-30 1-18-4-38z" />
          <path d="M592 210h38q5 8 3 14-3 6-22 7-19-1-22-7-2-6 3-14z" />
          <path d="M611 249q14 2 16 20-3 18-16 20-13-2-16-20 2-18 16-20z" />
          <circle cx="611" cy="267" r="7" />
        </g>

        {/* wash basin */}
        <path d="M656 210q-10 14-7 32 6 33 41 36 35-3 41-36 2-18-8-32" />
        <path d="M671 219q9-8 19-8t19 8l8 8q5 14-1 28-10 14-27 16-18-3-26-17-6-14 0-27z" stroke="#333" />
        <path d="M671 219q9 7 19 7t19-7" stroke="#333" />
        <path d="M675 221l2-2 2 2-2 2zM687 220l2-2 2 2-2 2zM700 221l2-2 2 2-2 2z" stroke="#444" />
        <circle cx="690" cy="240" r="4" stroke="#333" />
        <circle cx="690" cy="240" r="2" stroke="#333" />
        <path d="M689 231h1" />

        {/* temporary dimensions */}
        <g stroke="#8fa0d0">
          <path d="M611 168v22M608 176l6-6M672 190v24M667 188l10 6M667 212l10-6" />
        </g>
        <g stroke="#1f3a78">
          <path d="M675 184h12M675 180v8M687 180v8M677 201h12M677 197v8M689 197v8" />
          <g fill="#5a78c0">
            <circle cx="611" cy="182" r="3" />
            <circle cx="679" cy="191" r="3" />
            <circle cx="662" cy="210" r="3" />
            <circle cx="751" cy="172" r="3" />
          </g>
        </g>
        <g fill="#1f3a78" stroke="none" fontSize="11">
          <text x="670" y="163">1.14</text>
          <text x="661" y="207" transform="rotate(-90 661 207)">15</text>
        </g>

        {/* pointer highlight */}
        <circle cx="657" cy="316" r="22.500" fill="#ffff00" stroke="none" />
        <path d="M658.500 317.500v14l3.500-3 2.500 6 2.500-1-2.500-6h4z" fill="#fff" stroke="#222" />
      </g>
    </svg>
  );
}

function NavigationBar() {
  return (
    <div className="absolute right-[2px] top-[27px] w-8 h-[111px] flex flex-col items-center border-2 border-[#bbb] rounded-md bg-[#f4f4f4]/80">
      <button aria-label="Close navigation bar" className="self-end mr-1 mt-[2px]">
        <Svg w={7} h={7}><circle cx="3.500" cy="3.500" r="3" stroke="#888" /></Svg>
      </button>
      <button aria-label="Steering wheel" className="flex flex-col items-center mt-[7px]">
        <Svg w={26} h={26}>
          <circle cx="11" cy="11" r="9" stroke="#999" strokeWidth="2" />
          <circle cx="11" cy="11" r="4" stroke="#777" />
          <path d="M4 5l4 3M18 5l-4 3M4 17l4-3" stroke="#999" />
          <text x="12" y="24" fontSize="10" fill="#4a86b8" stroke="none">2D</text>
        </Svg>
        <Caret className="mt-[5px]" />
      </button>
      <span className="w-6 h-px mt-1 bg-[#bbb]" />
      <button aria-label="Zoom" className="flex flex-col items-center mt-[7px]">
        <Svg w={16} h={16}>
          <path d="M1 1h10v10H1z" fill="#c9dcc0" stroke="#8a9c86" />
          <circle cx="10" cy="10" r="3" fill="#eee" stroke="#666" />
          <path d="M12 12l3 3" stroke="#666" strokeWidth="2" />
        </Svg>
        <Caret className="mt-2" />
      </button>
      <button aria-label="Navigation options" className="self-end mr-1 mt-auto mb-[2px]">
        <Svg w={8} h={8}><circle cx="4" cy="4" r="3" stroke="#888" /><path d="M2 4h4" stroke="#888" /></Svg>
      </button>
    </div>
  );
}

function Watermark() {
  return (
    <div className="absolute right-[22px] bottom-[3px] w-[186px] h-[115px] flex flex-col items-center pointer-events-none">
      <Svg w={54} h={66} className="-ml-1">
        <path d="M1 1h52v30H1z" fill="#5b5d60" stroke="none" />
        <path d="M1 1h7v4H5v4h3v5H1z" fill="#2a6db5" stroke="none" />
        <path d="M9 9h14v14H9zM32 9h14v14H32z" fill="#fff" stroke="none" />
        <path d="M4 36l11-5h12l-14 8-4 3z" fill="#2a6db5" stroke="none" />
        <path d="M49 36l-11-5H25l15 8 4 3z" fill="#e23c35" stroke="none" />
        <path d="M5 60l20-12 9 4-21 13z" fill="#2a6db5" stroke="none" />
        <path d="M27 48l21 12-7 5-22-12z" fill="#e23c35" stroke="none" />
        <path d="M4 36l5 3 17 9 18-9 5-3v9L27 56 4 44z" fill="#5b5d60" stroke="none" />
      </Svg>
      <p dir="rtl" lang="ar" className="-mt-4 font-['DejaVu_Sans',sans-serif] text-[20px] leading-7 italic font-bold text-black whitespace-nowrap">
        محمود قحطان
      </p>
      <p dir="rtl" lang="ar" className="font-['DejaVu_Sans',sans-serif] text-[9px] leading-3 italic text-black whitespace-nowrap">
        شعر، أدب، تعليم، تصميم، إبداع!
      </p>
      <p className="mt-auto font-['Liberation_Sans',sans-serif] text-[13px] leading-4 font-bold text-black [text-shadow:0_0_3px_#fff,1px_2px_2px_#999]">
        www.MahmoudQahtan.com
      </p>
    </div>
  );
}

const viewIcons = [
  ["Detail Level", <Svg w={16} h={12}><path d="M1 1h14v10H1z" fill="#fff" /></Svg>],
  ["Visual Style", <Svg w={14} h={12}><path d="M1 5l4-4h8v6l-4 4H1zM1 5h8v6M9 5l4-4" fill="#fff" /></Svg>],
  ["Sun Path", <Svg w={15} h={13}><circle cx="6" cy="6" r="3" stroke="#d39a1c" /><path d="M6 0v2M6 10v2M0 6h2M2 2l1 1M10 2L9 3M2 10l1-1" stroke="#d39a1c" /><path d="M8 6l6 6M14 6l-6 6" stroke="#b5332c" strokeWidth="2" /></Svg>],
  ["Shadows", <Svg w={15} h={13}><circle cx="6" cy="5" r="4" stroke="#456a9c" /><path d="M1 11h7" stroke="#456a9c" /><path d="M8 6l6 6M14 6l-6 6" stroke="#b5332c" strokeWidth="2" /></Svg>],
  ["Crop View", <Svg w={16} h={13}><path d="M0 9h4M4 12V3h12M2 6h8M6 12V6" stroke="#456a9c" /><path d="M8 6l6 6M14 6l-6 6" stroke="#b5332c" strokeWidth="2" /></Svg>],
  ["Show Crop Region", <Svg w={16} h={13}><path d="M0 9h4M4 12V3h5M6 12V6" stroke="#456a9c" /><path d="M11 9q-2-2-1-5 2-2 4 0 1 3-1 5v3h-2z" stroke="#5a7fb0" fill="#e4eefa" /></Svg>],
  ["Temporary Hide", <Svg w={16} h={11}><path d="M0 2q3 0 4 3M4 7a3 3 0 0 0 5 0q0-3-4-3M9 5q1-2 4-4 2 0 2 3-1 4-5 3" /></Svg>],
  ["Reveal Hidden", <Svg w={8} h={12}><path d="M3 8Q0 5 2 2q2-2 4 0 2 3-1 6v3H3z" fill="#dbe8f8" stroke="#5a7fb0" /></Svg>],
  ["Constraints", <Svg w={14} h={12}><path d="M1 2h11v3M1 2v8h6" stroke="#222" strokeDasharray="2 1" /><circle cx="9" cy="8" r="3" stroke="#333" /></Svg>],
];

function Canvas() {
  return (
    <main className="relative flex flex-col flex-1 min-w-0 border-t border-l border-[#555] bg-white">
      <div className="flex flex-1 min-h-0">
        <div className="relative flex-1 min-w-0 overflow-hidden bg-white">
          <FloorPlan />
          <NavigationBar />
          <div className="absolute right-1 top-[7px] flex items-center gap-[7px]">
            <button aria-label="Minimize view"><Svg w={11} h={4}><path d="M1 1h9v2H1z" fill="#fff" stroke="#555" /></Svg></button>
            <button aria-label="Restore view"><Svg w={11} h={11}><path d="M3 1h7v7H3zM1 3h7v7H1z" fill="#fff" stroke="#333" /><path d="M4 6h2v2H4z" fill="#222" /></Svg></button>
            <button aria-label="Close view"><Svg w={11} h={11}><path d="M1 1h3l1.500 2L7 1h3v2L8 5.500 10 8v2H7L5.500 8 4 10H1V8l2-2.500L1 3z" fill="#fff" stroke="#333" /></Svg></button>
          </div>
        </div>
        <VScroll before={236} thumb={16} after={237} />
        <span className="w-[3px] bg-[#f0f0f0]" />
      </div>
      <div className="flex items-center shrink-0 h-[19px] pb-[2px] bg-[#eee] text-[11px] text-[#222]">
        <button className="w-[72px] pl-[23px] text-left whitespace-nowrap">1 : 100</button>
        {viewIcons.map(([name, icon]) => (
          <button key={name} aria-label={name} className="w-5 flex items-center justify-center">
            {icon}
          </button>
        ))}
        <button aria-label="Scroll left" className="w-4 flex justify-center"><Chevron dir="left" /></button>
        <div className="flex-1 flex justify-center">
          <div className="w-4 h-[14px] bg-[#c9c9c9]" />
        </div>
        <button aria-label="Scroll right" className="w-3 flex justify-end"><Chevron dir="right" /></button>
        <span className="w-[22px] flex justify-center">
          <Svg w={9} h={9}>
            <path d="M7 1h1M7 4h1M4 4h1M7 7h1M4 7h1M1 7h1" stroke="#999" strokeWidth="2" />
          </Svg>
        </span>
      </div>
      <Watermark />
    </main>
  );
}

const selectIcons = [
  ["Select Links", <Svg w={16} h={15}><path d="M1 3q2-3 5 0 3-3 5 0 2-3 4 0-2 4-4 1-3 3-5 0-3 3-5-1z" fill="#f3d25a" stroke="#b88a1c" /><path d="M7 5v8l2-2 2 4 1-1-1-3h3z" fill="#fff" /></Svg>],
  ["Select Underlay", <Svg w={16} h={15}><path d="M8 1h7M8 1L2 5h8M1 9l5-3h9M1 9h8" stroke="#3e6fa8" /><path d="M9 5v8l2-2 2 4 1-1-1-3h2z" fill="#fff" /></Svg>],
  ["Select Pinned", <Svg w={16} h={15}><path d="M3 1h8v5H3zM1 7h12M7 7v6" fill="#ef9a62" stroke="#b5602c" /><path d="M9 5v8l2-2 2 4 1-1-1-3h3z" fill="#fff" /></Svg>],
  ["Select by Face", <Svg w={16} h={15}><path d="M1 4l6-3v9l-6 4z" fill="#cfe4f6" stroke="#456a9c" /><path d="M9 1l6 5M15 1L9 6" stroke="#c22" strokeWidth="2" /><path d="M8 5v8l2-2 2 4 1-1-1-3h3z" fill="#fff" /></Svg>],
  ["Drag Elements", <Svg w={16} h={15}><path d="M5 1v9M1 5h9M4 2l1-1 1 1M2 4L1 5l1 1M9 4l1 1-1 1" stroke="#222" /><path d="M9 5v8l2-2 2 4 1-1-1-3h3z" fill="#fff" /></Svg>],
];

function StatusBar() {
  return (
    <footer className="flex items-center shrink-0 h-[22px] pl-px border-t border-[#888] bg-[#dadada] text-[11px] text-[#222]">
      <span className="w-[321px] whitespace-nowrap">Click to select, TAB for alternates, CTRL adds, SHIFT unselects.</span>
      <button aria-label="Worksets" className="w-[22px]">
        <Svg w={17} h={16}>
          <path d="M1 8l2-2h4v8H1zM9 8l2-2h3v8H9z" fill="#d6e6f2" stroke="#345f80" />
          <path d="M6 4q2-4 5-2M11 5l2 1" stroke="#3f8b4d" strokeWidth="2" />
        </Svg>
      </button>
      <div className="relative">
        <select aria-label="Active workset" className="appearance-none block w-[195px] h-[19px] bg-white border border-[#d0d0d0]" />
        <span className="absolute right-1 top-[6px] opacity-50"><Chevron dir="down" /></span>
      </div>
      <button className="flex items-center gap-1 w-[53px] pl-[7px]">
        <Svg w={14} h={15}>
          <path d="M4 1h9v4H6zM3 8h5l-1 3 1 3H1l2-3z" fill="#999" stroke="#777" />
        </Svg>
        :0
      </button>
      <button aria-label="Editing requests" className="w-6 flex justify-center">
        <Svg w={15} h={14}><path d="M1 1h13v12H1z" fill="#fff" /><path d="M1 3h13" strokeWidth="2" /><path d="M4 6v5M4 7h3M8 7h4M6 10h6" /></Svg>
      </button>
      <button aria-label="Design options" className="w-[26px] flex justify-center">
        <Svg w={14} h={14}><path d="M1 1h12v12H1z" fill="#888" stroke="#777" /><path d="M2 8h6M6 5l3 3-3 3" stroke="#333" strokeWidth="2" /></Svg>
      </button>
      <div className="relative">
        <select aria-label="Design option" className="appearance-none block w-[148px] h-[19px] pl-[2px] bg-white border border-[#d0d0d0] text-[#888]">
          <option>Main Model</option>
        </select>
        <span className="absolute right-1 top-[6px] opacity-50"><Chevron dir="down" /></span>
      </div>
      <div className="flex items-center ml-auto pr-[64px]">
        {selectIcons.map(([name, icon]) => (
          <button key={name} aria-label={name} className="w-[25px] flex justify-center">{icon}</button>
        ))}
        <button className="flex items-end">
          <Svg w={15} h={14}>
            <path d="M1 1h13L9 7v6l-3-2V7z" fill="#ddd" />
          </Svg>
          <span className="leading-3">:1</span>
        </button>
      </div>
    </footer>
  );
}

export default function App() {
  return (
    <div className="h-screen bg-black pl-[35px] pr-[34px] font-['Open_Sans','Noto_Sans',sans-serif]">
      <div className="h-full flex flex-col overflow-hidden bg-[#f0f0f0]">
        <Header />
        <Ribbon />
        <OptionsBar />
        <div className="flex flex-1 min-h-0">
          <aside className="w-[212px] shrink-0 flex flex-col bg-[#f0f0f0] pr-[4px]">
            <Properties />
            <ProjectBrowser />
          </aside>
          <Canvas />
        </div>
        <StatusBar />
      </div>
    </div>
  );
}
